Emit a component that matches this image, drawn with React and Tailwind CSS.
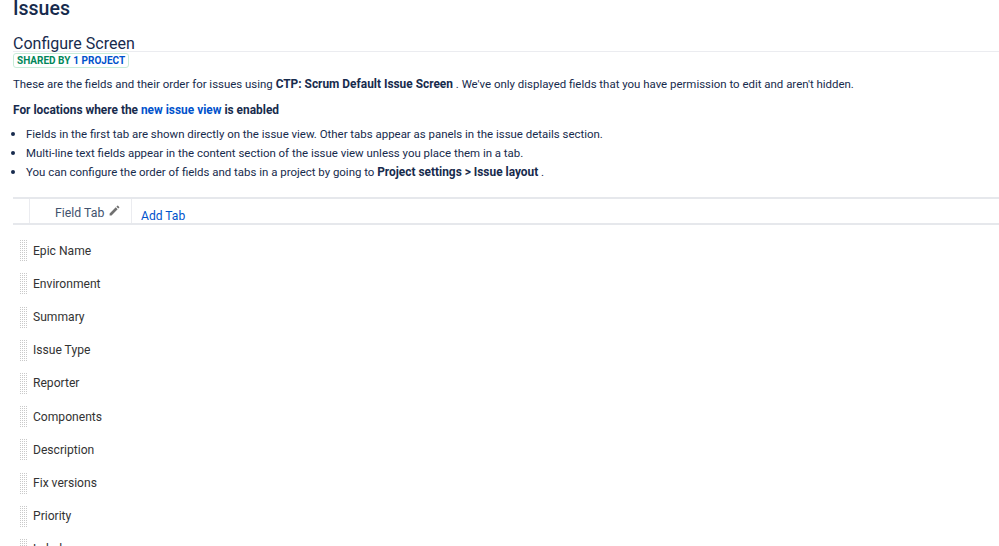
import React from "react";

const fields = [
  "Epic Name",
  "Environment",
  "Summary",
  "Issue Type",
  "Reporter",
  "Components",
  "Description",
  "Fix versions",
  "Priority",
  "Labels",
];

const Grip = () => (
  <svg width="7" height="21" className="shrink-0">
    <defs>
      <pattern id="grip" width="2" height="2" patternUnits="userSpaceOnUse">
        <rect width="1" height="1" fill="#c9c9c9" />
      </pattern>
    </defs>
    <rect width="7" height="21" fill="url(#grip)" />
  </svg>
);

const App = () => {
  return (
    <div className="h-[546px] w-[999px] overflow-hidden bg-white font-['Roboto',sans-serif] text-[11.45px] text-[#172b4d]">
      <h1 className="mt-[-5px] ml-[13px] text-[19.5px] leading-[28px] font-medium">Issues</h1>

      <div className="mt-[13px] ml-[13px] border-b border-[#ebecf0]">
        <h2 className="text-[16px] leading-[15px] font-normal">Configure Screen</h2>
      </div>

      <div className="ml-[13px]">
        <span className="mt-[-2px] inline-flex h-[15px] items-center rounded-[3px] border border-[#c8ecd8] px-[3px] text-[10px] font-bold">
          <span className="text-[#00875a]">SHARED BY</span>
          <span className="ml-[3px] text-[#0052cc]">1 PROJECT</span>
        </span>

        <p className="mt-[6px] leading-[18px]">
          These are the fields and their order for issues using <b className="text-[11.9px]">CTP: Scrum Default Issue Screen</b> . We've only displayed fields that you have permission to edit and aren't hidden.
        </p>

        <p className="mt-[8px] text-[11.9px] leading-[18px] font-bold">
          For locations where the <span className="text-[#0052cc]">new issue view</span> is enabled
        </p>

        <ul className="mt-[6px] list-disc pl-[13px] leading-[18px] marker:text-[13px]">
          <li className="h-[19px]">Fields in the first tab are shown directly on the issue view. Other tabs appear as panels in the issue details section.</li>
          <li className="h-[19px]">Multi-line text fields appear in the content section of the issue view unless you place them in a tab.</li>
          <li className="h-[19px]">You can configure the order of fields and tabs in a project by going to <b className="text-[11.9px]">Project settings &gt; Issue layout</b> .</li>
        </ul>
      </div>

      <div className="mt-[15px] ml-[13px] flex h-[28px] border-y-2 border-[#e6e8ec]">
        <div className="ml-[16px] flex w-[103px] items-start gap-[4px] border-x border-[#ebecf0] bg-white pt-[5px] pl-[25px] text-[12.3px] text-[#42526e]">
          <span>Field Tab</span>
          <svg viewBox="0 0 24 24" className="h-[13px] w-[13px] fill-[#707070]">
            <path d="M3 17.5V21h3.5L17.8 9.7l-3.5-3.5L3 17.5zM20.7 6.8a1 1 0 0 0 0-1.4l-2.1-2.1a1 1 0 0 0-1.4 0l-1.7 1.7 3.5 3.5 1.7-1.7z" />
          </svg>
        </div>
        <span className="ml-[9px] pt-[8px] text-[12.1px] text-[#0052cc]">Add Tab</span>
      </div>

      <div className="mt-[9px] ml-[20px] text-[12.1px]">
        {fields.map((f) => (
          <div key={f} className="flex h-[33.2px] items-center gap-[6px] text-[#333]">
            <Grip />
            <span>{f}</span>
          </div>
        ))}
      </div>
    </div>
  );
};

export default App;
